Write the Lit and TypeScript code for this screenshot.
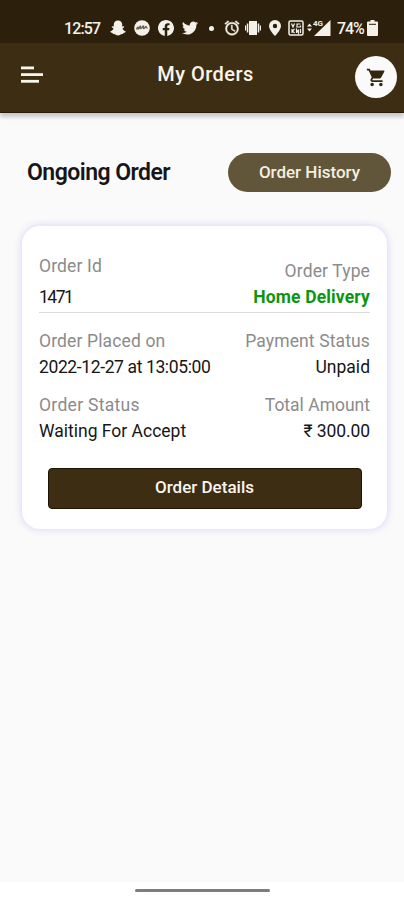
import { LitElement, html, css } from "lit";
import { customElement } from "lit/decorators.js";

@customElement("status-bar")
class StatusBar extends LitElement {
  static styles = css`
    :host {
      display: flex;
      align-items: center;
      height: 43px;
      box-sizing: border-box;
      padding: 13px 25px 0 64px;
      background: #2c200c;
      color: #f4f1ea;
      font: 500 16px "Roboto", sans-serif;
    }
    .time { width: 46px; letter-spacing: -0.85px; }
    .pct { width: 29px; margin-left: 6px; margin-right: 1px; letter-spacing: -1px; }
    svg { display: block; flex: none; fill: currentColor; }
    .i { width: 16px; height: 16px; margin-right: 8px; }
    .sys { width: 16px; height: 16px; margin-right: 5.3px; }
    .vpn { margin-right: 3px; }
    .dot { width: 5px; height: 5px; border-radius: 50%; background: currentColor; margin: 0 10px 0 3px; flex: none; }
    .net { width: 24px; height: 18px; }
    .bat { width: 11px; height: 16px; }
    .tiny { font: 700 8px "Roboto", sans-serif; }
  `;
  render() {
    return html`
      <span class="time">12:57</span>
      <svg class="i" viewBox="0 0 16 16"><path d="M8 .5c2.700 0 4.200 1.800 4.200 4.200v1.800l1.500-.3c.6.200.7.900.1 1.300l-1.300.9c.5 1.300 1.500 2.300 3.300 3-.1.900-1.200 1.300-2.300 1.500l-.5 1.200c-1.500-.3-2 .1-2.800.7-.9.8-3.500.8-4.400 0-.8-.6-1.300-1-2.800-.7l-.5-1.200C1.400 12.700.3 12.300.2 11.400c1.800-.7 2.800-1.700 3.300-3L2.200 7.500c-.6-.4-.5-1.100.1-1.300l1.500.3V4.700C3.800 2.300 5.300.5 8 .5z"/></svg>
      <svg class="i" viewBox="0 0 16 16"><circle cx="8" cy="8" r="7.800"/><path d="M2.500 9.500c1-3 2-3 1.700-1S6 6 6.500 6s-1 3 .5 2.500S8.500 5.500 9.500 6s-1 3 .5 2.500 1.500-2.500 2-2 .2 1.500 1.500 2" fill="none" stroke="#6b604e" stroke-width="1.300"/></svg>
      <svg class="i" viewBox="0 0 24 24"><path d="M24 12.070C24 5.400 18.600 0 12 0S0 5.400 0 12.070C0 18.100 4.400 23.100 10.130 24v-8.440H7.080v-3.490h3.050V9.410c0-3.020 1.790-4.690 4.530-4.690 1.310 0 2.680.240 2.680.240v2.970h-1.510c-1.490 0-1.960.930-1.960 1.890v2.250h3.330l-.530 3.490h-2.800V24C19.600 23.100 24 18.100 24 12.070z"/></svg>
      <svg class="i" viewBox="0 0 24 24"><path d="M24 4.560a9.800 9.800 0 0 1-2.830.78 4.930 4.930 0 0 0 2.170-2.730 9.900 9.900 0 0 1-3.130 1.200 4.920 4.920 0 0 0-8.390 4.490A13.980 13.980 0 0 1 1.670 3.150a4.920 4.920 0 0 0 1.530 6.570 4.900 4.900 0 0 1-2.230-.61v.06a4.930 4.930 0 0 0 3.950 4.830 4.900 4.900 0 0 1-2.220.08 4.930 4.930 0 0 0 4.600 3.420A9.900 9.900 0 0 1 0 19.540a13.940 13.940 0 0 0 7.550 2.210c9.140 0 14.310-7.720 13.990-14.640A10 10 0 0 0 24 4.560z"/></svg>
      <span class="dot"></span>
      <svg class="sys" viewBox="1 1 22 22"><path d="M22 5.720l-4.600-3.860-1.290 1.530 4.600 3.860L22 5.720zM7.880 3.390L6.600 1.860 2 5.710l1.290 1.530 4.590-3.850zM12.500 8H11v6l4.750 2.850.75-1.230-4-2.370V8zM12 4a9 9 0 1 0 0 18 9 9 0 0 0 0-18zm0 16a7 7 0 1 1 0-14 7 7 0 0 1 0 14z" stroke="currentColor" stroke-width="0.600"/></svg>
      <svg class="sys" viewBox="0 0 16 16"><path d="M4 1h8v14H4zM1.800 3.500h1.500v9H1.800zM12.700 3.500h1.500v9h-1.500zM0 5.500h1.200v5H0zM14.800 5.500H16v5h-1.200z"/></svg>
      <svg class="sys" viewBox="0 0 16 16"><path fill-rule="evenodd" d="M8 0a6 6 0 0 1 6 6c0 4-6 10-6 10S2 10 2 6a6 6 0 0 1 6-6zm0 3.800a2.200 2.200 0 1 0 0 4.400 2.200 2.200 0 0 0 0-4.400z"/></svg>
      <svg class="i vpn" viewBox="0 0 16 16"><rect x="1" y="1" width="14" height="14" rx="1.500" fill="none" stroke="currentColor" stroke-width="1.500"/><path d="M3.500 3.500 5 7l1.500-3.500M12.500 4H9v3h3.500V5.500M4 9v4M6.500 9 4.500 11l2 2M8.500 13V9.500l2 3.500V9.500M12.500 9v4" fill="none" stroke="currentColor" stroke-width="1.200"/></svg>
      <svg class="net" viewBox="0 0 24 18"><path d="M0 7.500 2.500 4.500 5 7.500zM0 9.500h5L2.500 12.500zM7 17 23.500 1v16z"/><text class="tiny" x="6" y="7">4G</text></svg>
      <span class="pct">74%</span>
      <svg class="bat" viewBox="0 0 11 16"><path d="M3.500 0h4v1.500H10q1 0 1 1V15q0 1-1 1H1q-1 0-1-1V2.500q0-1 1-1h2.500z"/><path d="M2 4.300h7" stroke="#2c200c"/></svg>
    `;
  }
}

@customElement("app-header")
class AppHeader extends LitElement {
  static styles = css`
    :host {
      display: grid;
      grid-template-columns: 50px 1fr 50px;
      align-items: center;
      height: 70px;
      box-sizing: border-box;
      padding: 0 7px 0 7px;
      background: #3d2e13;
      border-bottom: 1px solid #2a1c08;
      box-shadow: 0 4px 4px rgba(0, 0, 0, 0.2);
      color: #f8f5ee;
    }
    .menu { margin: -6px 0 0 14px; width: 22px; height: 18px; display: block; fill: currentColor; }
    h1 {
      margin: -8px 0 0 7px;
      text-align: center;
      font: 500 20px/24px "Roboto", sans-serif;
      letter-spacing: 0.45px;
    }
    .cart {
      width: 42px;
      height: 42px;
      margin: -1px 0 0 8px;
      border-radius: 50%;
      background: #fafafa;
      display: grid;
      place-items: center;
    }
    .cart svg { width: 21px; height: 21px; fill: #33260f; }
  `;
  render() {
    return html`
      <svg class="menu" viewBox="0 0 22 18"><rect y="0.500" width="13" height="2.800"/><rect y="7.200" width="22" height="2.800"/><rect y="13.900" width="18" height="2.800"/></svg>
      <h1>My Orders</h1>
      <div class="cart"><svg viewBox="0 0 24 24"><path d="M7 18c-1.100 0-1.990.9-1.990 2S5.900 22 7 22s2-.9 2-2-.9-2-2-2zM1 2v2h2l3.600 7.590-1.350 2.450C4.520 15.370 5.480 17 7 17h12v-2H7.420a.25.25 0 0 1-.25-.25l.03-.12.9-1.630h7.450c.75 0 1.410-.41 1.750-1.030l3.580-6.490A1 1 0 0 0 20 4H5.210l-.94-2H1zm16 16c-1.100 0-1.990.9-1.990 2s.89 2 1.990 2 2-.9 2-2-.9-2-2-2z"/></svg></div>
    `;
  }
}

@customElement("order-card")
class OrderCard extends LitElement {
  static styles = css`
    :host {
      display: block;
      box-sizing: border-box;
      height: 303px;
      margin: 0 17px 0 22px;
      padding: 30px 17px 0;
      border-radius: 18px;
      background: #fff;
      box-shadow: 0 0 7px 1px rgba(205, 205, 250, 0.75);
      font: 400 17.5px/20px "Roboto", sans-serif;
      color: #161616;
    }
    .row { display: flex; justify-content: space-between; }
    .col { display: flex; flex-direction: column; align-items: flex-start; gap: 6px; white-space: nowrap; }
    .end { align-items: flex-end; }
    .first { height: 56px; border-bottom: 1px solid #dcdcdc; margin-bottom: 18px; }
    .first .col { gap: 11px; }
    .first .end { gap: 6px; padding-top: 5px; }
    .second { margin-bottom: 18px; }
    .label { color: #8b8b8b; letter-spacing: 0.13px; }
    .status { letter-spacing: 0.3px; }
    .total { letter-spacing: 0; }
    .id { letter-spacing: -1.5px; }
    .date { letter-spacing: -0.38px; }
    .amount { letter-spacing: -0.1px; }
    .green { color: #0d960d; font-weight: 700; letter-spacing: 0.15px; }
    .details {
      display: block;
      width: 314px;
      height: 41px;
      margin: 27px 0 0 8.500px;
      padding: 0 0 3px;
      border: 1px solid #1e1404;
      border-radius: 4px;
      background: #3d2e13;
      color: #f8f5ee;
      font: 500 17px "Roboto", sans-serif;
    }
  `;
  render() {
    return html`
      <div class="row first">
        <div class="col"><span class="label">Order Id</span><span class="id">1471</span></div>
        <div class="col end"><span class="label">Order Type</span><span class="green">Home Delivery</span></div>
      </div>
      <div class="row second">
        <div class="col"><span class="label">Order Placed on</span><span class="date">2022-12-27 at 13:05:00</span></div>
        <div class="col end"><span class="label">Payment Status</span><span>Unpaid</span></div>
      </div>
      <div class="row">
        <div class="col"><span class="label status">Order Status</span><span>Waiting For Accept</span></div>
        <div class="col end"><span class="label total">Total Amount</span><span class="amount">₹ 300.00</span></div>
      </div>
      <button class="details">Order Details</button>
    `;
  }
}

@customElement("app-root")
class AppRoot extends LitElement {
  static styles = css`
    :host {
      display: flex;
      flex-direction: column;
      height: 900px;
      background: #fafafa;
      font-family: "Roboto", sans-serif;
    }
    .heading {
      display: flex;
      justify-content: space-between;
      align-items: center;
      height: 39px;
      margin: 40px 13px 34px 27px;
    }
    h2 { margin: 0; font-size: 23px; font-weight: 600; line-height: 28px; color: #161616; letter-spacing: -0.53px; }
    .history {
      width: 163px;
      height: 39px;
      padding: 0 0 2px;
      border: 0;
      border-radius: 20px;
      background: #62563a;
      color: #f4eee0;
      font: 500 17px "Roboto", sans-serif;
    }
    .nav { margin-top: auto; height: 18px; background: #fff; display: flex; justify-content: center; }
    .pill { width: 135px; height: 3px; margin-top: 7px; border-radius: 2px; background: #7d7d7d; }
  `;
  render() {
    return html`
      <status-bar></status-bar>
      <app-header></app-header>
      <div class="heading"><h2>Ongoing Order</h2><button class="history">Order History</button></div>
      <order-card></order-card>
      <div class="nav"><div class="pill"></div></div>
    `;
  }
}
